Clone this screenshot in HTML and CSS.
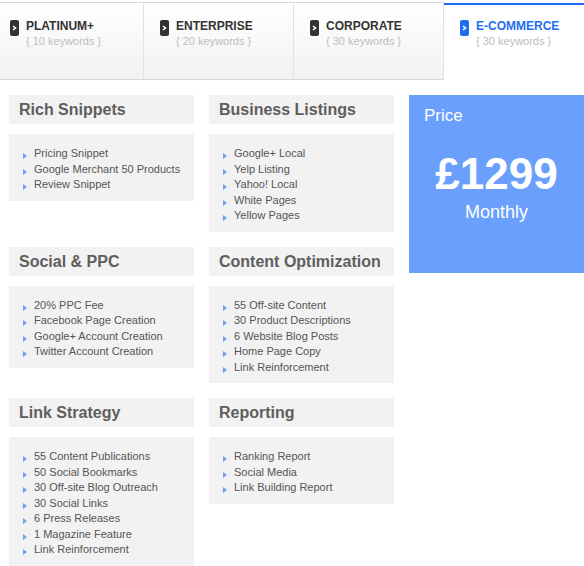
FILE: index.html
```html
<!DOCTYPE html>
<html lang="en">
<head>
    <meta charset="UTF-8">
    <meta name="viewport" content="width=device-width, initial-scale=1.0">
    <title>Packages</title>
    <link rel="stylesheet" href="styles.css">
</head>
<body>
    <!-- Package Tabs -->
    <div class="tabs">
        <div class="tab">
            <svg class="tab-icon" width="9" height="16" viewBox="0 0 9 16"><rect width="9" height="16" rx="2" fill="#333"/><polyline points="3,6 5.5,8 3,10" fill="none" stroke="#fff" stroke-width="1.6"/></svg>
            <div>
                <div class="tab-title">PLATINUM+</div>
                <div class="tab-sub">{ 10 keywords }</div>
            </div>
        </div>
        <div class="tab">
            <svg class="tab-icon" width="9" height="16" viewBox="0 0 9 16"><rect width="9" height="16" rx="2" fill="#333"/><polyline points="3,6 5.5,8 3,10" fill="none" stroke="#fff" stroke-width="1.6"/></svg>
            <div>
                <div class="tab-title">ENTERPRISE</div>
                <div class="tab-sub">{ 20 keywords }</div>
            </div>
        </div>
        <div class="tab">
            <svg class="tab-icon" width="9" height="16" viewBox="0 0 9 16"><rect width="9" height="16" rx="2" fill="#333"/><polyline points="3,6 5.5,8 3,10" fill="none" stroke="#fff" stroke-width="1.6"/></svg>
            <div>
                <div class="tab-title">CORPORATE</div>
                <div class="tab-sub">{ 30 keywords }</div>
            </div>
        </div>
        <div class="tab active">
            <svg class="tab-icon" width="9" height="16" viewBox="0 0 9 16"><rect width="9" height="16" rx="2" fill="#1f6ef2"/><polyline points="3,6 5.5,8 3,10" fill="none" stroke="#fff" stroke-width="1.6"/></svg>
            <div>
                <div class="tab-title">E-COMMERCE</div>
                <div class="tab-sub">{ 30 keywords }</div>
            </div>
        </div>
    </div>

    <!-- Package Content -->
    <div class="content">
        <div class="features">
            <div class="feature">
                <h3>Rich Snippets</h3>
                <ul>
                    <li>Pricing Snippet</li>
                    <li>Google Merchant 50 Products</li>
                    <li>Review Snippet</li>
                </ul>
            </div>
            <div class="feature">
                <h3>Business Listings</h3>
                <ul>
                    <li>Google+ Local</li>
                    <li>Yelp Listing</li>
                    <li>Yahoo! Local</li>
                    <li>White Pages</li>
                    <li>Yellow Pages</li>
                </ul>
            </div>
            <div class="feature">
                <h3>Social &amp; PPC</h3>
                <ul>
                    <li>20% PPC Fee</li>
                    <li>Facebook Page Creation</li>
                    <li>Google+ Account Creation</li>
                    <li>Twitter Account Creation</li>
                </ul>
            </div>
            <div class="feature">
                <h3>Content Optimization</h3>
                <ul>
                    <li>55 Off-site Content</li>
                    <li>30 Product Descriptions</li>
                    <li>6 Website Blog Posts</li>
                    <li>Home Page Copy</li>
                    <li>Link Reinforcement</li>
                </ul>
            </div>
            <div class="feature">
                <h3>Link Strategy</h3>
                <ul>
                    <li>55 Content Publications</li>
                    <li>50 Social Bookmarks</li>
                    <li>30 Off-site Blog Outreach</li>
                    <li>30 Social Links</li>
                    <li>6 Press Releases</li>
                    <li>1 Magazine Feature</li>
                    <li>Link Reinforcement</li>
                </ul>
            </div>
            <div class="feature">
                <h3>Reporting</h3>
                <ul>
                    <li>Ranking Report</li>
                    <li>Social Media</li>
                    <li>Link Building Report</li>
                </ul>
            </div>
        </div>

        <div class="price">
            <div class="price-label">Price</div>
            <div class="price-amount">£1299</div>
            <div class="price-period">Monthly</div>
        </div>
    </div>
</body>
</html>
```

FILE: styles.css
```css
/* Reset */
* {
    margin: 0;
    padding: 0;
    box-sizing: border-box;
}

body {
    font-family: 'Liberation Sans', Arial, sans-serif;
    background: #fff;
    width: 584px;
    overflow: hidden;
}

/* Tabs */
.tabs {
    display: flex;
    margin-left: -6px;
    padding-top: 2px;
    width: 600px;
}

.tab {
    display: flex;
    align-items: flex-start;
    gap: 7px;
    width: 150px;
    height: 78px;
    padding: 15px 0 0 16px;
    border-top: 1px solid #d9d9d9;
    border-bottom: 1px solid #d9d9d9;
    border-right: 1px solid #e2e2e2;
    background: linear-gradient(to bottom, #ffffff, #f2f2f2);
}

.tab-icon {
    flex-shrink: 0;
    margin-top: 2px;
}

.tab-title {
    font-size: 12px;
    font-weight: bold;
    line-height: 16px;
    color: #333;
}

.tab-sub {
    font-size: 11px;
    line-height: 14px;
    color: #bdbdbd;
}

.tab.active {
    margin-top: 1px;
    height: 77px;
    border-top: 2px solid #1f6ef2;
    border-bottom: none;
    border-right: none;
    background: #fff;
    padding-top: 13px;
}

.tab.active .tab-title {
    color: #1f6ef2;
}

/* Content */
.content {
    display: flex;
    align-items: flex-start;
    gap: 15px;
    margin-top: 15px;
    padding-left: 9px;
}

.features {
    display: grid;
    grid-template-columns: 185px 185px;
    column-gap: 15px;
    row-gap: 15px;
    align-items: start;
}

.feature h3 {
    height: 29px;
    line-height: 29px;
    padding: 0 10px;
    background: #f2f2f2;
    font-size: 16px;
    font-weight: bold;
    color: #5e5e5e;
}

.feature ul {
    list-style: none;
    margin-top: 10px;
    padding: 12px 0 8px 25px;
    background: #f2f2f2;
}

.feature li {
    position: relative;
    font-size: 11px;
    line-height: 15.5px;
    color: #555;
}

.feature li:before {
    content: '';
    position: absolute;
    left: -11px;
    top: 7px;
    border-left: 4px solid #6f9ef0;
    border-top: 3px solid transparent;
    border-bottom: 3px solid transparent;
}

/* Price */
.price {
    width: 175px;
    height: 178px;
    padding: 11px 15px;
    background: #6a9ffc;
    color: #fff;
    text-align: center;
}

.price-label {
    font-size: 17px;
    line-height: 20px;
    text-align: left;
}

.price-amount {
    margin-top: 26px;
    font-size: 44px;
    font-weight: bold;
    line-height: 44px;
}

.price-period {
    margin-top: 6px;
    font-size: 18px;
    line-height: 20px;
}
```
